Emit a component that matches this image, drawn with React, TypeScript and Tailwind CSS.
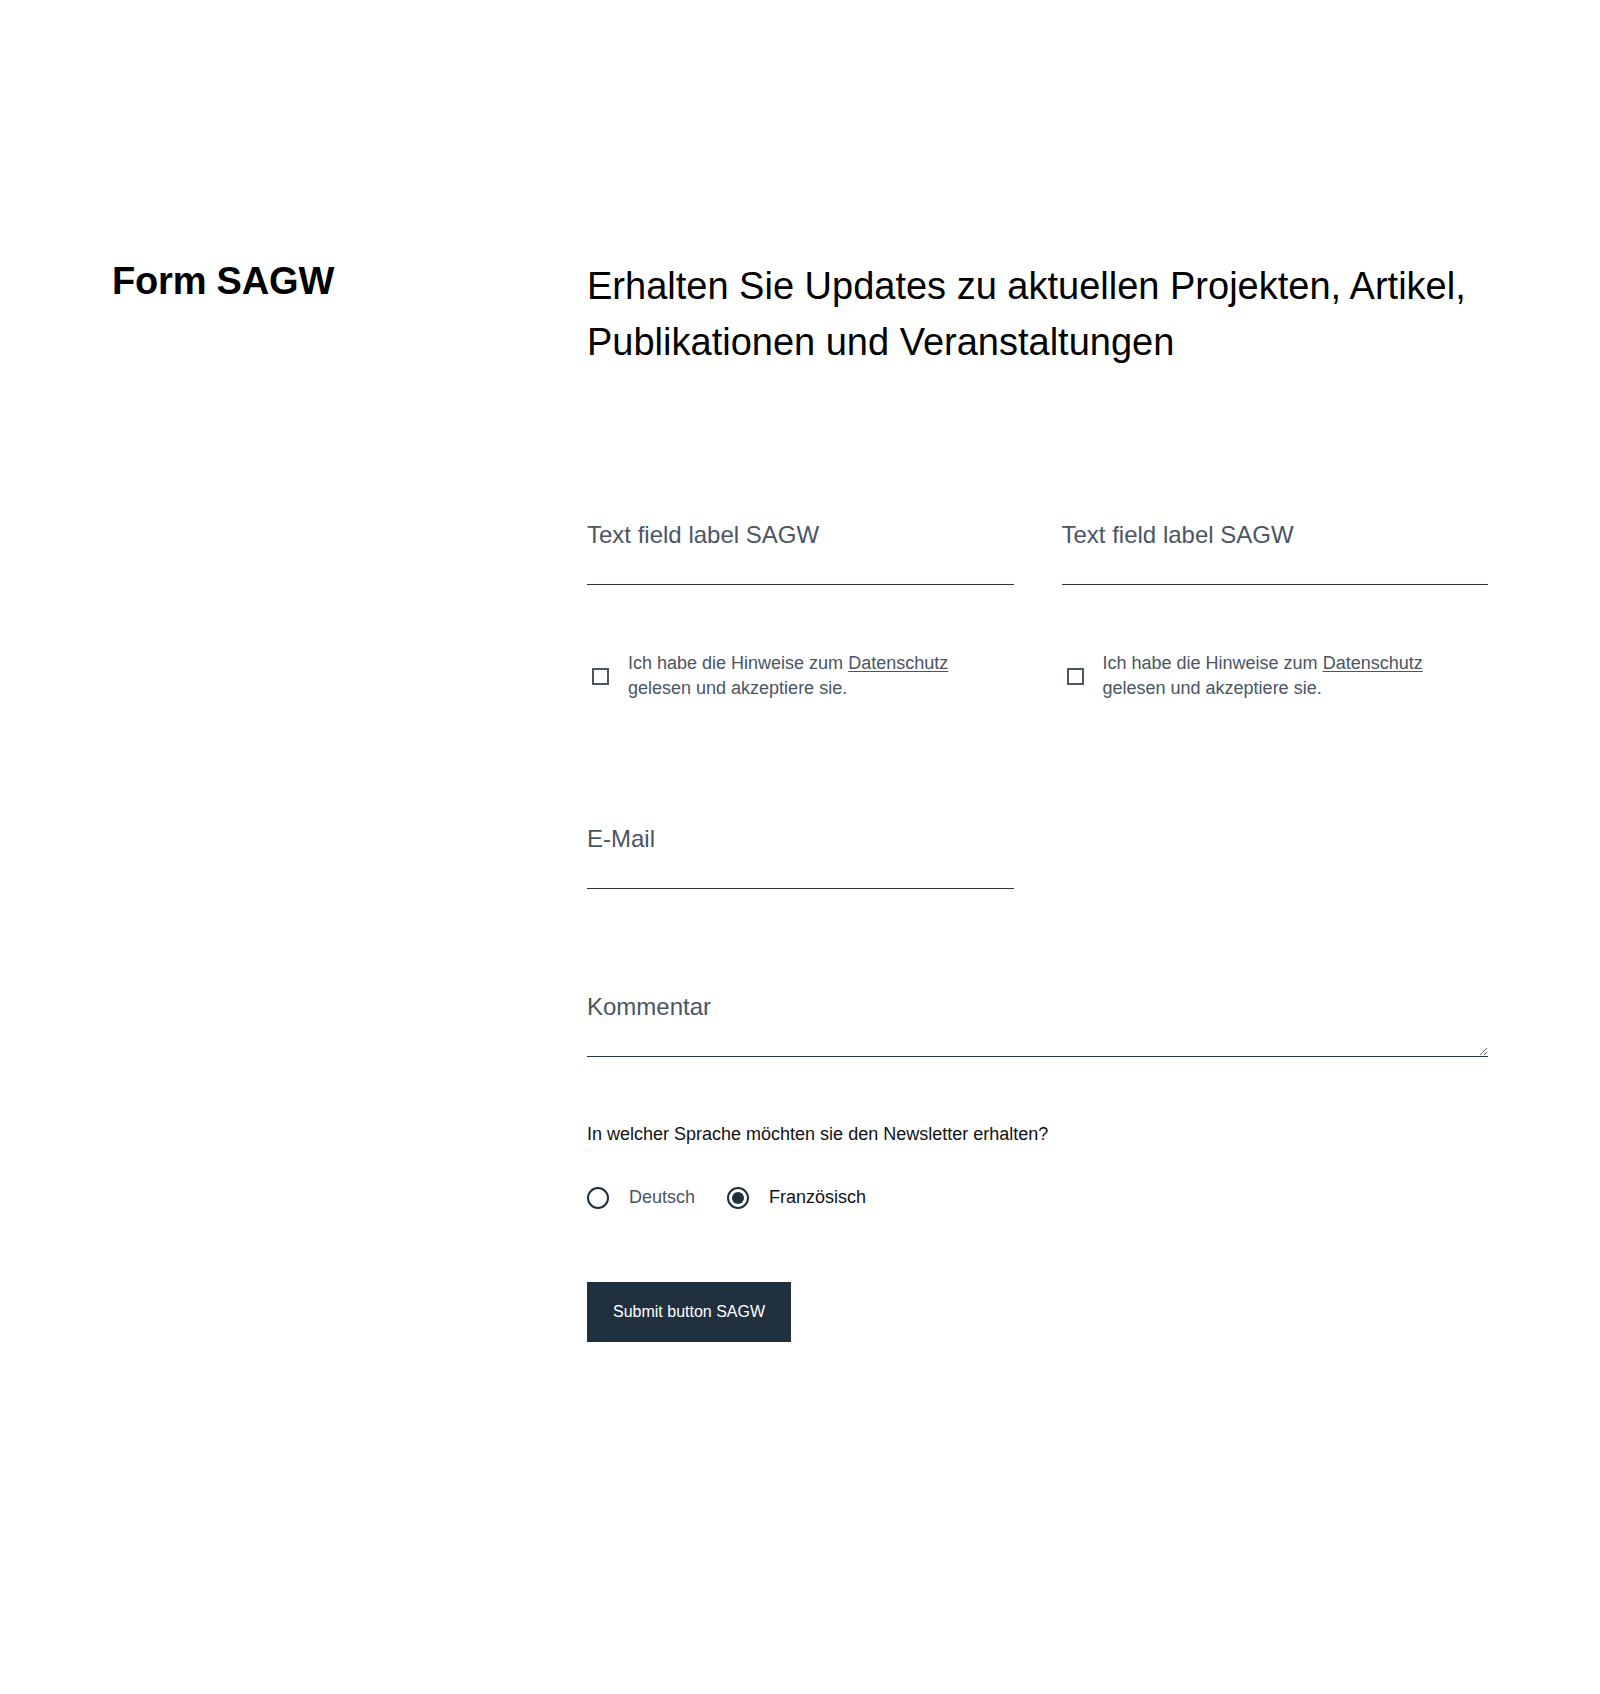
import React, { useState } from "react";

const font = { fontFamily: '"Liberation Sans", Arial, sans-serif' };

function TextField({ placeholder }: { placeholder: string }) {
  return (
    <input
      type="text"
      placeholder={placeholder}
      className="block w-full border-0 border-b border-[#263645] bg-transparent p-0 pb-[34px] text-[24px] leading-[30px] text-[#1f2937] placeholder:text-[#4b5563] outline-none"
    />
  );
}

function Consent() {
  return (
    <label className="flex items-center">
      <span className="ml-[5px] mr-[19px] block h-[17px] w-[17px] shrink-0 border-2 border-[#4b5563] bg-white" />
      <span className="text-[18px] leading-[25px] text-[#4b5563]">
        Ich habe die Hinweise zum{" "}
        <a href="#" className="underline underline-offset-2">
          Datenschutz
        </a>
        <br />
        gelesen und akzeptiere sie.
      </span>
    </label>
  );
}

function Radio({
  label,
  checked,
  onClick,
}: {
  label: string;
  checked: boolean;
  onClick: () => void;
}) {
  return (
    <button type="button" onClick={onClick} className="flex items-center">
      <span className="flex h-[22px] w-[22px] items-center justify-center rounded-full border-2 border-[#1e2f3e]">
        {checked && <span className="block h-[12px] w-[12px] rounded-full bg-[#1e2f3e]" />}
      </span>
      <span
        className={
          "ml-[20px] text-[18px] leading-[25px] " +
          (checked ? "text-[#111111]" : "text-[#4b5563]")
        }
      >
        {label}
      </span>
    </button>
  );
}

export default function App() {
  const [lang, setLang] = useState("fr");
  return (
    <div style={font} className="min-h-[1694px] w-full bg-white text-black">
      <div className="grid grid-cols-[475px_1fr] px-[112px] pt-[258px]">
        <div>
          <h1 className="mt-[5px] text-[38px] font-bold leading-[36px] tracking-[-0.005em] text-black">
            Form SAGW
          </h1>
        </div>
        <div>
          <h2 className="text-[38px] font-normal leading-[56px] tracking-[0em] text-black">
            Erhalten Sie Updates zu aktuellen Projekten, Artikel,
            <br />
            Publikationen und Veranstaltungen
          </h2>

          <div className="mt-[150px] grid grid-cols-2 gap-x-[48px]">
            <TextField placeholder="Text field label SAGW" />
            <TextField placeholder="Text field label SAGW" />
            <div className="mt-[66px]">
              <Consent />
            </div>
            <div className="mt-[66px]">
              <Consent />
            </div>
            <div className="mt-[123px]">
              <TextField placeholder="E-Mail" />
            </div>
          </div>

          <textarea
            rows={1}
            placeholder="Kommentar"
            className="mt-[103px] block h-[65px] w-full border-0 border-b border-[#263645] bg-transparent p-0 text-[24px] leading-[30px] text-[#1f2937] placeholder:text-[#4b5563] outline-none"
          />

          <p className="mt-[65px] text-[18px] leading-[25px] text-[#111111]">
            In welcher Sprache möchten sie den Newsletter erhalten?
          </p>

          <div className="mt-[38px] flex items-center gap-[32px]">
            <Radio label="Deutsch" checked={lang === "de"} onClick={() => setLang("de")} />
            <Radio label="Französisch" checked={lang === "fr"} onClick={() => setLang("fr")} />
          </div>

          <button
            type="button"
            className="mt-[72px] flex h-[60px] items-center bg-[#21303f] px-[26px] text-[16px] text-white"
          >
            Submit button SAGW
          </button>
        </div>
      </div>
    </div>
  );
}
